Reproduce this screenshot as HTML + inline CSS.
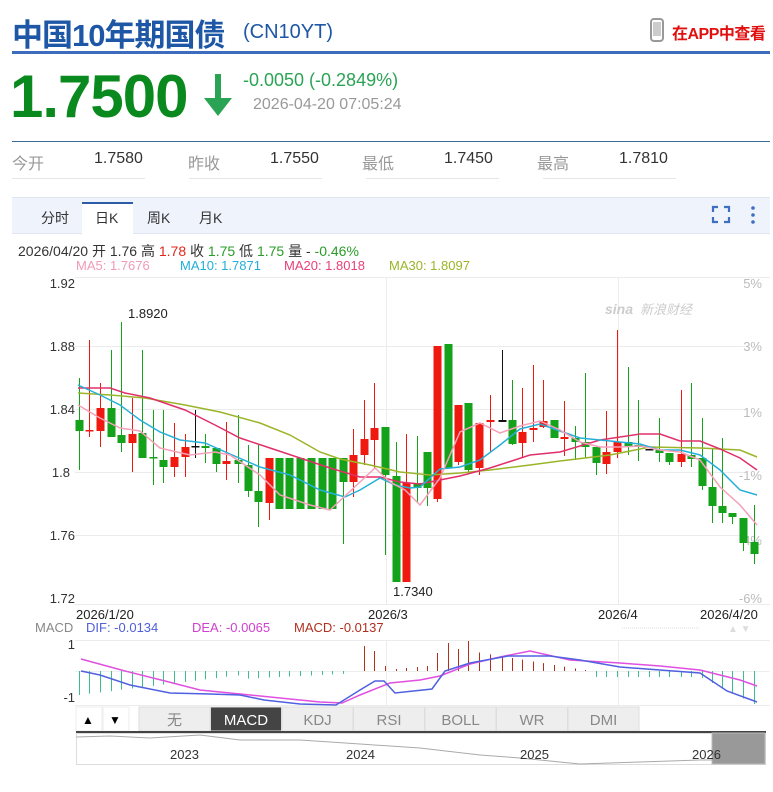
<!DOCTYPE html>
<html><head><meta charset="utf-8"><style>
*{margin:0;padding:0;box-sizing:border-box}
body{width:773px;height:792px;background:#fff;font-family:"Liberation Sans","Noto Sans CJK SC",sans-serif;position:relative;overflow:hidden}
.a{position:absolute;white-space:nowrap}
</style></head><body>
<div class="a" style="left:12px;top:10px;font-size:31px;font-weight:bold;color:#1d57a6;letter-spacing:-1px">中国10年期国债</div>
<div class="a" style="left:243px;top:21px;font-size:20px;color:#1d57a6">(CN10YT)</div>
<svg class="a" style="left:650px;top:18px" width="14" height="24"><rect x="1" y="1" width="12" height="22" rx="3" fill="#fff" stroke="#999" stroke-width="2"/><rect x="3" y="4" width="8" height="14" fill="#ccc"/></svg>
<div class="a" style="left:672px;top:20px;font-size:16px;font-weight:bold;color:#e01010;letter-spacing:-0.5px">在APP中查看</div>
<div class="a" style="left:12px;top:51px;width:758px;height:3px;background:#3d6cbf"></div>
<div class="a" style="left:10px;top:62px;font-size:60px;font-weight:bold;color:#0a8a1e;letter-spacing:-1px">1.7500</div>
<svg class="a" style="left:202px;top:72px" width="32" height="46"><rect x="13" y="2" width="6" height="28" fill="#2ba355"/><polygon points="2,26 30,26 16,44" fill="#2ba355"/></svg>
<div class="a" style="left:243px;top:70px;font-size:18px;color:#2ba355">-0.0050 (-0.2849%)</div>
<div class="a" style="left:253px;top:96px;font-size:16px;color:#999">2026-04-20 07:05:24</div>
<div class="a" style="left:12px;top:141px;width:758px;height:1px;background:#3b6a9a"></div>
<div class="a" style="left:12px;top:150px;font-size:16px;color:#999">今开</div><div class="a" style="left:94px;top:150px;font-size:16px;color:#333">1.7580</div>
<div class="a" style="left:188px;top:150px;font-size:16px;color:#999">昨收</div><div class="a" style="left:270px;top:150px;font-size:16px;color:#333">1.7550</div>
<div class="a" style="left:362px;top:150px;font-size:16px;color:#999">最低</div><div class="a" style="left:444px;top:150px;font-size:16px;color:#333">1.7450</div>
<div class="a" style="left:537px;top:150px;font-size:16px;color:#999">最高</div><div class="a" style="left:619px;top:150px;font-size:16px;color:#333">1.7810</div>
<div class="a" style="left:12px;top:178px;width:133px;height:1px;background:#e6e6e6"></div>
<div class="a" style="left:189px;top:178px;width:133px;height:1px;background:#e6e6e6"></div>
<div class="a" style="left:366px;top:178px;width:133px;height:1px;background:#e6e6e6"></div>
<div class="a" style="left:543px;top:178px;width:133px;height:1px;background:#e6e6e6"></div>
<div class="a" style="left:12px;top:197px;width:758px;height:37px;background:#eef3fc;border-top:1px solid #dfe6f2;border-bottom:1px solid #dfe6f2"></div>
<div class="a" style="left:82px;top:202px;width:51px;height:32px;background:#fff;border-top:2px solid #2d5da8"></div>
<div class="a" style="left:41px;top:208px;font-size:14px;color:#333">分时</div>
<div class="a" style="left:95px;top:208px;font-size:14px;color:#333">日K</div>
<div class="a" style="left:147px;top:208px;font-size:14px;color:#333">周K</div>
<div class="a" style="left:199px;top:208px;font-size:14px;color:#333">月K</div>
<svg class="a" style="left:711px;top:204px" width="50" height="22"><path d="M2 8V3H7M13 3H18V8M2 13V18H7M13 18H18V13" fill="none" stroke="#3f6fbf" stroke-width="2.2"/><circle cx="42" cy="4" r="1.8" fill="#3f6fbf"/><circle cx="42" cy="11" r="1.8" fill="#3f6fbf"/><circle cx="42" cy="18" r="1.8" fill="#3f6fbf"/></svg>
<div class="a" style="left:18px;top:241px;font-size:14px;color:#333">2026/04/20 开 1.76 高 <span style="color:#e0261a">1.78</span> 收 <span style="color:#2a9c2a">1.75</span> 低 <span style="color:#2a9c2a">1.75</span> 量 - <span style="color:#2a9c2a">-0.46%</span></div>
<div class="a" style="left:76px;top:258px;font-size:13px;color:#f09ab8">MA5: 1.7676</div>
<div class="a" style="left:180px;top:258px;font-size:13px;color:#22aed8">MA10: 1.7871</div>
<div class="a" style="left:284px;top:258px;font-size:13px;color:#e8407a">MA20: 1.8018</div>
<div class="a" style="left:389px;top:258px;font-size:13px;color:#9ab527">MA30: 1.8097</div>
<svg class="a" style="left:0;top:0" width="773" height="792" id="s">
<g stroke="#ececec" stroke-width="1">
<line x1="75" y1="277.5" x2="770" y2="277.5"/>
<line x1="75" y1="346.5" x2="745" y2="346.5"/><line x1="75" y1="409.5" x2="745" y2="409.5"/><line x1="75" y1="472.5" x2="745" y2="472.5"/><line x1="75" y1="535.5" x2="745" y2="535.5"/><line x1="75" y1="604.5" x2="770" y2="604.5"/>
<line x1="386.5" y1="277" x2="386.5" y2="604"/><line x1="618.5" y1="277" x2="618.5" y2="604"/>
<line x1="75" y1="640.5" x2="770" y2="640.5"/><line x1="75" y1="705.5" x2="770" y2="705.5"/>
<line x1="386.5" y1="640" x2="386.5" y2="705"/><line x1="618.5" y1="640" x2="618.5" y2="705"/>
</g>
<g font-size="13" fill="#333" text-anchor="end"><text x="75" y="288">1.92</text><text x="75" y="351">1.88</text><text x="75" y="414">1.84</text><text x="70" y="477">1.8</text><text x="75" y="540">1.76</text><text x="75" y="603">1.72</text></g>
<g font-size="13" fill="#bbb" text-anchor="end"><text x="762" y="288">5%</text><text x="762" y="351">3%</text><text x="762" y="417">1%</text><text x="762" y="480">-1%</text><text x="762" y="545">-4%</text><text x="762" y="603">-6%</text></g>
<text x="128" y="318" font-size="13" fill="#222">1.8920</text>
<text x="393" y="596" font-size="13" fill="#222">1.7340</text>
<text x="605" y="314" font-size="14" fill="#ccc" font-style="italic" font-weight="bold">sina</text><text x="640" y="314" font-size="13" fill="#ccc" font-style="italic">新浪财经</text>
<g font-size="13" fill="#222"><text x="76" y="619">2026/1/20</text><text x="368" y="619">2026/3</text><text x="598" y="619">2026/4</text><text x="700" y="619">2026/4/20</text></g>
<line x1="622" y1="628" x2="700" y2="628" stroke="#ddd" stroke-dasharray="1,1"/>
<text x="728" y="632" font-size="10" fill="#ddd">▲ ▼</text>
<g font-size="13"><text x="35" y="632" fill="#888">MACD</text><text x="86" y="632" fill="#5060d8">DIF: -0.0134</text><text x="192" y="632" fill="#d040d0">DEA: -0.0065</text><text x="294" y="632" fill="#b03020">MACD: -0.0137</text></g>
<g font-size="13" fill="#333" text-anchor="end"><text x="75" y="649">1</text><text x="75" y="702">-1</text></g>
<line x1="75" y1="671.5" x2="770" y2="671.5" stroke="#eee"/>
<g id="c"></g><g id="m"></g>
<rect x="76" y="707" width="26" height="24" fill="#fff" stroke="#eee"/><rect x="103" y="707" width="26" height="24" fill="#fff" stroke="#eee"/>
<text x="82" y="724" font-size="12" fill="#000">▲</text><text x="109" y="724" font-size="12" fill="#000">▼</text>
<g id="tabs"></g>
<rect x="76" y="731" width="690" height="3" fill="#444"/>
<rect x="76.5" y="733.5" width="689" height="31" fill="#fff" stroke="#ddd"/>
<polyline fill="none" stroke="#aaa" points="76,737 110,736 150,738 200,735 240,740 300,740 360,744 420,748 480,755 520,758 580,764 640,762 700,760 712,760"/>
<rect x="712" y="733" width="53" height="31" fill="#999" stroke="#bbb"/>
<g font-size="13" fill="#333"><text x="170" y="759">2023</text><text x="346" y="759">2024</text><text x="520" y="759">2025</text><text x="692" y="759">2026</text></g>
</svg>
<script>
var NS="http://www.w3.org/2000/svg",c=document.getElementById('c'),m=document.getElementById('m');
function el(p,t,a){var e=document.createElementNS(NS,t);for(var k in a)e.setAttribute(k,a[k]);p.appendChild(e);return e}
var G="#15a21b",R="#f0190f",K="#111";
var d=[[79,420,431,378,470,G],[89,430,431,340,437,R],[100,408,431,383,447,R],[111,408,437,350,437,G],[121,435,443,322,452,G],[132,434,443,398,472,R],[142,433,458,350,458,G],[153,457,458,410,485,G],[163,460,467,410,483,G],[174,457,467,423,477,R],[185,447,457,434,477,R],[195,446,447,410,458,K],[205,446,448,434,463,G],[216,448,464,448,472,G],[226,461,464,422,480,R],[238,460,464,415,483,G],[248,465,491,445,497,G],[258,491,502,445,527,G],[269,458,503,458,520,R],[279,458,509,458,509,G],[289,458,509,458,509,G],[300,458,509,458,509,G],[311,458,509,458,509,G],[322,458,509,458,509,G],[332,458,509,458,509,G],[343,458,482,458,544,G],[353,455,482,429,497,R],[364,439,455,400,465,R],[374,428,440,383,468,R],[385,427,475,427,555,G],[396,476,582,442,582,G],[406,483,582,434,582,R],[417,483,488,436,502,G],[427,452,488,452,506,G],[437,346,499,346,502,R],[448,344,468,344,468,G],[458,405,462,405,465,R],[468,403,470,403,472,G],[479,423,468,423,475,R],[490,420,422,395,452,R],[502,420,422,350,422,K],[512,420,444,380,445,G],[522,432,443,388,457,R],[533,428,430,365,442,R],[543,421,427,380,428,R],[554,420,438,420,438,G],[564,437,439,401,456,R],[575,438,442,426,460,G],[585,442,447,373,458,G],[596,447,463,447,475,G],[606,452,464,411,474,R],[617,442,452,330,458,R],[628,442,446,367,455,G],[638,445,447,400,461,G],[649,449,450,449,450,K],[659,450,453,418,462,G],[669,453,462,453,465,G],[681,454,462,390,467,R],[691,455,459,383,467,G],[702,458,486,418,490,G],[712,487,506,448,523,G],[722,506,513,438,523,G],[732,513,517,513,524,G],[743,518,543,518,551,G],[754,542,554,505,564,G]];
d.forEach(function(q){el(c,'line',{x1:q[0]+.5,x2:q[0]+.5,y1:q[3],y2:q[4],stroke:q[5],'stroke-width':1});el(c,'rect',{x:q[0]-3.5,y:q[1],width:8,height:Math.max(1.5,q[2]-q[1]),fill:q[5]});});
function pl(s,col){el(c,'polyline',{points:s,fill:'none',stroke:col,'stroke-width':1.5});}
pl("78,393 110,395 145,398 185,405 220,412 260,423 290,435 320,452 340,459 370,465 400,472 430,475 460,473 490,470 530,465 560,461 610,455 650,447 700,448 740,450 757,457","#9ab527");
pl("78,388 110,388 125,393 150,398 185,410 215,425 240,438 270,448 300,458 330,468 360,477 380,477 400,482 420,484 440,480 460,476 490,468 530,455 560,452 600,440 640,434 660,434 680,441 700,441 720,449 740,458 757,470","#e0306a");
pl("78,385 100,395 120,405 140,420 160,432 180,440 205,443 230,454 260,467 290,475 320,490 345,497 360,490 380,478 395,485 410,488 420,487 440,469 460,467 480,460 500,445 520,429 540,424 560,431 580,438 600,440 620,442 640,444 660,450 680,450 700,455 720,470 740,490 757,495","#25b0d8");
pl("78,405 100,418 120,428 140,431 160,448 190,455 215,452 230,455 260,475 280,495 310,505 330,510 345,496 360,482 375,468 390,482 405,490 420,505 440,478 460,432 480,423 500,433 520,426 540,421 560,430 580,442 600,447 620,447 640,446 660,450 680,452 700,460 720,487 740,505 757,525","#f4a0b8");
var z=671;
for(var i=0;i<d.length;i++){var x=d[i][0],h;
 if(x<240)h=-(24-i*1.3);else if(x<345)h=-(8-(x-240)/20);else if(x<470)h=[6,10,25,20,0,2,3,4,5,18,28,22,30,20,22,20][Math.min(15,Math.round((x-345)/10.5))]||5;else if(x<590)h=Math.max(1,20-(x-470)/6);else if(x<700)h=-6;else h=-(6+(x-700)*0.5);
 if(x>345&&x<360)h=0;
 el(m,'line',{x1:x+.5,x2:x+.5,y1:z,y2:z-h,stroke:h>0?'#b0301c':'#3cbf8c','stroke-width':1});}
el(m,'polyline',{points:"81,659 125,671 165,681 200,690 240,694 280,698 320,702 342,703 360,695 390,683 420,680 440,676 470,664 500,657 530,651 570,660 620,663 660,666 700,670 740,680 757,686",fill:'none',stroke:'#e050e0','stroke-width':1.5});
el(m,'polyline',{points:"81,671 100,675 130,685 170,693 210,694 240,695 264,700 300,704 336,705 360,690 375,681 384,681 395,693 432,689 445,671 470,663 508,656 550,656 580,660 620,667 660,670 700,673 727,691 757,702",fill:'none',stroke:'#5060e0','stroke-width':1.5});
var tb=document.getElementById('tabs'),names=["无","MACD","KDJ","RSI","BOLL","WR","DMI"];
names.forEach(function(n,i){var x=139+i*71.5;el(tb,'rect',{x:x,y:707,width:71,height:24,fill:i==1?'#444':'#eee',stroke:'#ddd'});var t=el(tb,'text',{x:x+35.5,y:725,'font-size':15,'text-anchor':'middle',fill:i==1?'#fff':'#888'});t.textContent=n;});
</script>
</body></html>
